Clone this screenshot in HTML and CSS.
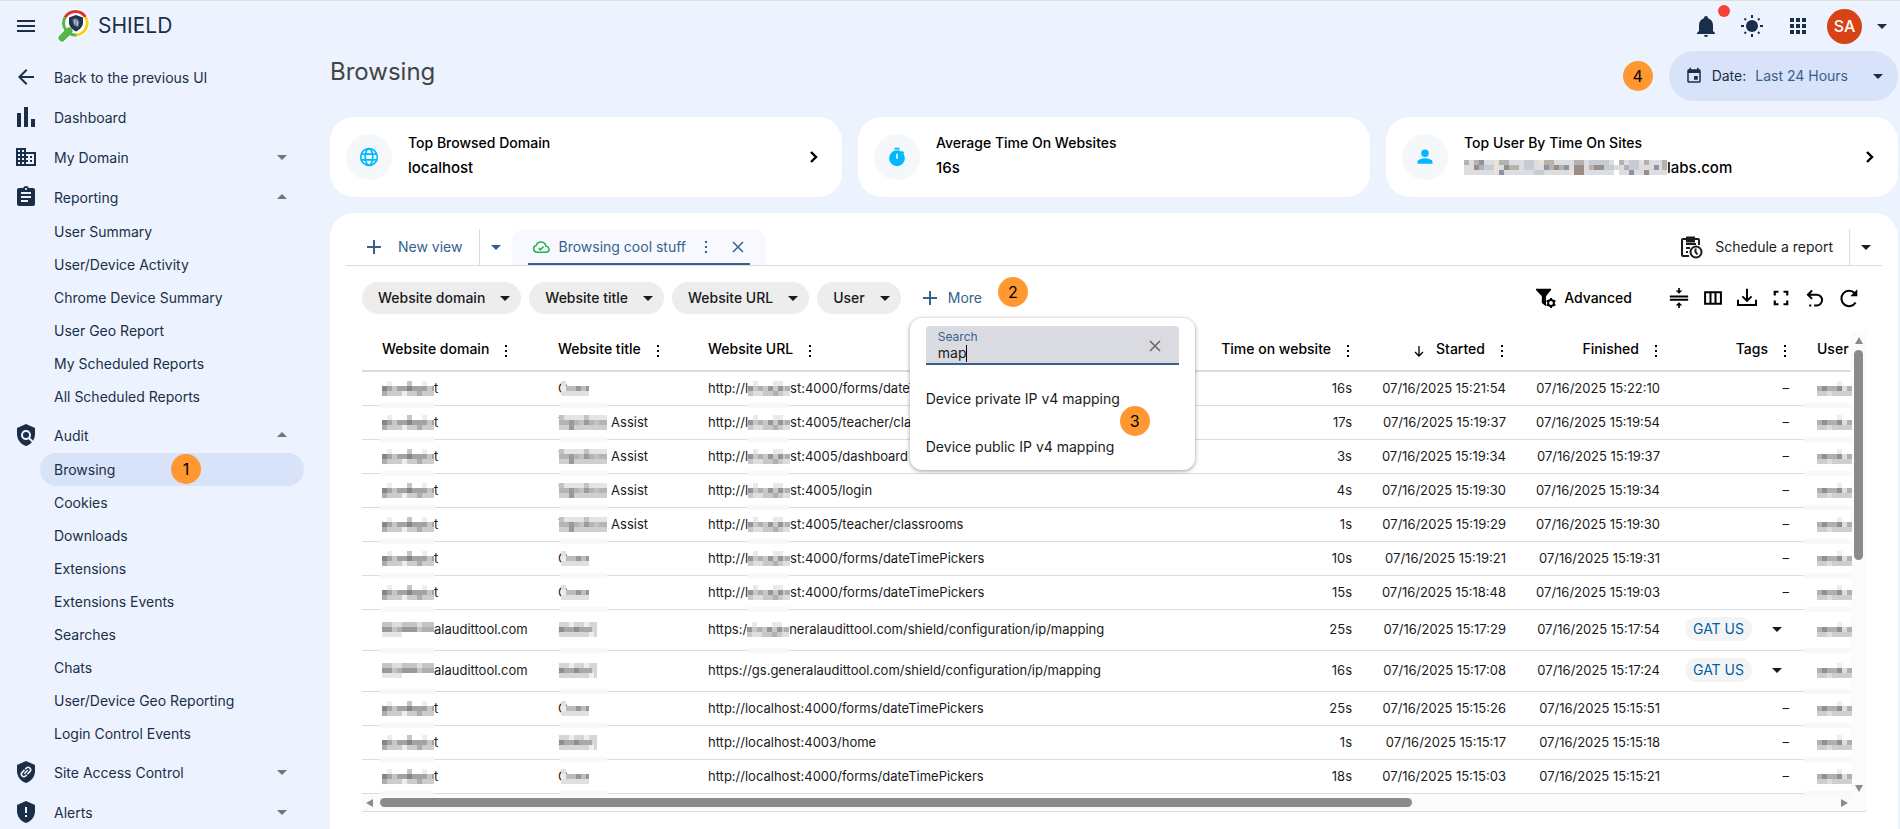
FILE: index.html
```html
<!DOCTYPE html>
<html lang="en">
<head>
    <meta charset="UTF-8">
    <meta name="viewport" content="width=device-width, initial-scale=1.0">
    <title>Shield - Browsing</title>
    <link rel="stylesheet" href="styles.css">
</head>
<body>
    <!-- Shared icons -->
    <svg class="sprite" aria-hidden="true">
        <symbol id="i-down" viewBox="0 0 24 24"><path d="M7 10l5 5 5-5z"/></symbol>
        <symbol id="i-up" viewBox="0 0 24 24"><path d="M7 14l5-5 5 5z"/></symbol>
        <symbol id="i-dots" viewBox="0 0 16 16"><path d="M7 2h2v2H7zM7 7h2v2H7zM7 12h2v2H7z"/></symbol>
        <symbol id="i-plus" viewBox="0 0 20 20"><path d="M9 3h2v6h6v2h-6v6H9v-6H3V9h6z"/></symbol>
        <symbol id="i-close" viewBox="0 0 16 16"><path d="M3 3l10 10M13 3L3 13" fill="none" stroke="currentColor" stroke-width="1.5"/></symbol>
        <symbol id="i-chevron" viewBox="0 0 24 24"><path d="M9 7l5 5-5 5" fill="none" stroke="currentColor" stroke-width="2.4"/></symbol>
        <symbol id="i-shield" viewBox="0 0 24 24"><path d="M12 1L3 5v6c0 5.55 3.84 10.74 9 12 5.16-1.26 9-6.45 9-12V5z"/></symbol>

        <!-- Redaction blocks, 5px cells -->
        <symbol id="m-domain" viewBox="0 0 52 15">
            <path fill="#ccc" d="M0 10h52v5H0z"/><path fill="#a3a3a3" d="M0 5h52v5H0z"/>
            <path fill="#eee" d="M5 0h5v5H5zM40 0h5v5h-5zM20 10h5v5h-5z"/>
            <path fill="#c6c6c6" d="M25 0h5v5h-5zM10 5h5v5h-5zM45 5h5v5h-5z"/>
            <path fill="#868686" d="M0 5h5v5H0zM25 5h5v5h-5z"/><path fill="#adadad" d="M0 10h5v5H0zM35 10h5v5h-5z"/>
        </symbol>
        <symbol id="m-gs" viewBox="0 0 52 15">
            <path fill="#c4c4c4" d="M0 0h52v10H0z"/><path fill="#e6e6e6" d="M0 10h20v5H0z"/>
            <path fill="#999" d="M0 5h10v5H0zM20 5h15v5H20z"/><path fill="#b0b0b0" d="M15 5h5v5h-5zM40 5h12v5H40z"/>
            <path fill="#ddd" d="M10 0h10v5H10zM35 0h5v5h-5z"/>
        </symbol>
        <symbol id="m-short" viewBox="0 0 28 15">
            <path fill="#e0e0e0" d="M0 0h5v5H0zM0 10h28v5H0z"/><path fill="#bcbcbc" d="M0 5h28v5H0z"/>
            <path fill="#989898" d="M15 5h5v5h-5zM25 5h3v5h-3z"/><path fill="#ededed" d="M0 5h5v5H0z"/>
        </symbol>
        <symbol id="m-long" viewBox="0 0 48 15">
            <path fill="#e4e4e4" d="M0 0h48v5H0z"/><path fill="#b4b4b4" d="M0 5h48v5H0z"/><path fill="#cfcfcf" d="M0 10h48v5H0z"/>
            <path fill="#9a9a9a" d="M10 5h5v10h-5zM25 5h5v5h-5z"/><path fill="#c2c2c2" d="M25 0h5v5h-5zM0 0h5v5H0zM20 5h5v5h-5zM35 5h5v5h-5z"/>
        </symbol>
        <symbol id="m-shield" viewBox="0 0 38 15">
            <path fill="#d6d6d6" d="M0 0h38v15H0z"/><path fill="#a8a8a8" d="M5 5h28v5H5z"/>
            <path fill="#8e8e8e" d="M0 5h5v5H0zM15 5h5v5h-5z"/><path fill="#efefef" d="M10 0h5v5h-5zM25 0h5v5h-5zM30 10h5v5h-5z"/>
        </symbol>
        <symbol id="m-url" viewBox="0 0 42 15">
            <path fill="#c8c8c8" d="M0 5h42v10H0z"/><path fill="#e9e9e9" d="M5 0h5v5H5zM25 0h10v5H25z"/>
            <path fill="#969696" d="M0 5h5v5H0zM20 5h5v5h-5zM30 5h5v5h-5z"/><path fill="#b0b0b0" d="M10 5h5v5h-5zM25 10h5v5h-5zM37 5h5v5h-5z"/>
            <path fill="#dedede" d="M5 10h10v5H5zM35 10h7v5h-7z"/>
        </symbol>
        <symbol id="m-user" viewBox="0 0 35 15">
            <path fill="#eee" d="M20 0h5v5h-5z"/><path fill="#b0b0b0" d="M0 5h35v5H0z"/><path fill="#cecece" d="M0 10h35v5H0z"/>
            <path fill="#909090" d="M5 5h5v5H5zM20 5h5v5h-5z"/><path fill="#ddd" d="M10 10h5v5h-5zM25 5h5v5h-5z"/>
        </symbol>
    </svg>

    <header class="topbar">
        <button class="icon-btn" aria-label="Menu">
            <svg viewBox="0 0 24 24"><path d="M3 18h18v-2H3zm0-5h18v-2H3zm0-7v2h18V6z"/></svg>
        </button>
        <a class="brand" href="#">
            <svg class="logo" viewBox="0 0 34 34">
                <path d="M12 22l-7 7" stroke="#fff" stroke-width="9" stroke-linecap="round"/>
                <circle cx="19" cy="14" r="14" fill="#fff"/>
                <path d="M12 22l-7 7" stroke="#55b748" stroke-width="7" stroke-linecap="round"/>
                <g fill="none" stroke-width="3">
                    <path d="M8 8.500a12 12 0 0 1 20.500-.5" stroke="#dd3333"/>
                    <path d="M28.500 8a12 12 0 0 1-9 18" stroke="#fbd116"/>
                    <path d="M19.500 26A12 12 0 0 1 8 8.500" stroke="#55b748"/>
                </g>
                <path d="M19 6l7 2.500v5c0 4-3 7-7 9-4-2-7-5-7-9v-5z" fill="#1f3450"/>
                <path d="M16 10h4l2 3-1 5-4-2zM15 13h2M19 11v6" fill="#b9c3cf" stroke="#54657c"/>
            </svg>
            <span>SHIELD</span>
        </a>
        <div class="topbar-tools">
            <button class="icon-btn notify" aria-label="Notifications">
                <svg viewBox="0 0 24 24"><path d="M21 19v1H3v-1l2-2v-6c0-3.100 2.030-5.830 5-6.710V4a2 2 0 0 1 4 0v.29c2.970.88 5 3.610 5 6.710v6l2 2m-7 2a2 2 0 0 1-4 0"/></svg>
            </button>
            <button class="icon-btn" aria-label="Theme">
                <svg viewBox="0 0 24 24"><circle cx="12" cy="12" r="6"/><path d="M1 12h3M20 12h3M12 1v3M12 20v3M4.500 4.500L6 6M18 18l1.500 1.500M4.500 19.500L6 18M18 6l1.500-1.500" stroke="currentColor" stroke-width="2"/></svg>
            </button>
            <button class="icon-btn" aria-label="Apps">
                <svg viewBox="0 0 24 24"><path d="M4 4h4v4H4zM10 4h4v4h-4zM16 4h4v4h-4zM4 10h4v4H4zM10 10h4v4h-4zM16 10h4v4h-4zM4 16h4v4H4zM10 16h4v4h-4zM16 16h4v4h-4z"/></svg>
            </button>
            <button class="account" aria-label="Account">
                <span class="avatar">SA</span>
                <svg><use href="#i-down"/></svg>
            </button>
        </div>
    </header>

    <div class="layout">
        <nav class="sidebar">
            <a class="nav-item" href="#">
                <svg viewBox="0 0 24 24"><path d="M20 11H7.830l5.590-5.590L12 4l-8 8 8 8 1.410-1.410L7.830 13H20z"/></svg>
                <span>Back to the previous UI</span>
            </a>
            <a class="nav-item" href="#">
                <svg viewBox="0 0 24 24"><path d="M3 8h4v14H3zM10 2h4v20h-4zM17 14h4v8h-4z"/></svg>
                <span>Dashboard</span>
            </a>
            <a class="nav-item" href="#">
                <svg viewBox="0 0 24 24"><path d="M12 7V3H2v18h20V7H12zM6 19H4v-2h2v2zm0-4H4v-2h2v2zm0-4H4V9h2v2zm0-4H4V5h2v2zm4 12H8v-2h2v2zm0-4H8v-2h2v2zm0-4H8V9h2v2zm0-4H8V5h2v2zm10 12h-8v-2h2v-2h-2v-2h2v-2h-2V9h8v10zm-2-8h-2v2h2v-2zm0 4h-2v2h2v-2z"/></svg>
                <span>My Domain</span>
                <svg class="caret"><use href="#i-down"/></svg>
            </a>
            <a class="nav-item" href="#">
                <svg viewBox="0 0 24 24"><path d="M19 3h-4.180C14.400 1.840 13.300 1 12 1c-1.300 0-2.400.84-2.820 2H5c-1.100 0-2 .9-2 2v14c0 1.100.9 2 2 2h14c1.100 0 2-.9 2-2V5c0-1.100-.9-2-2-2zm-7 0c.55 0 1 .45 1 1s-.45 1-1 1-1-.45-1-1 .45-1 1-1zm2 14H7v-2h7v2zm3-4H7v-2h10v2zm0-4H7V7h10v2z"/></svg>
                <span>Reporting</span>
                <svg class="caret"><use href="#i-up"/></svg>
            </a>
            <div class="subnav">
                <a href="#">User Summary</a>
                <a href="#">User/Device Activity</a>
                <a href="#">Chrome Device Summary</a>
                <a href="#">User Geo Report</a>
                <a href="#">My Scheduled Reports</a>
                <a href="#">All Scheduled Reports</a>
            </div>
            <a class="nav-item" href="#">
                <svg viewBox="0 0 24 24"><path d="M21 5l-9-4-9 4v6c0 5.550 3.840 10.740 9 12 2.300-.56 4.330-1.900 5.880-3.710l-3.120-3.120c-1.940 1.290-4.580 1.070-6.290-.64-1.950-1.950-1.950-5.120 0-7.070 1.950-1.950 5.120-1.950 7.070 0 1.710 1.710 1.920 4.350.64 6.290l2.900 2.900C20.290 15.690 21 13.380 21 11V5z"/><circle cx="12" cy="12" r="3"/></svg>
                <span>Audit</span>
                <svg class="caret"><use href="#i-up"/></svg>
            </a>
            <div class="subnav">
                <a href="#" class="active">Browsing <span class="step step-1">1</span></a>
                <a href="#">Cookies</a>
                <a href="#">Downloads</a>
                <a href="#">Extensions</a>
                <a href="#">Extensions Events</a>
                <a href="#">Searches</a>
                <a href="#">Chats</a>
                <a href="#">User/Device Geo Reporting</a>
                <a href="#">Login Control Events</a>
            </div>
            <a class="nav-item" href="#">
                <svg viewBox="0 0 24 24"><use href="#i-shield"/><g fill="none" stroke="#ecf3ff" stroke-width="1.500" transform="rotate(-45 12 12)"><path d="M12.500 9.500H9a2.500 2.500 0 0 0 0 5h1.500M11.500 14.500H15a2.500 2.500 0 0 0 0-5h-1.500M9.500 12h5"/></g></svg>
                <span>Site Access Control</span>
                <svg class="caret"><use href="#i-down"/></svg>
            </a>
            <a class="nav-item" href="#">
                <svg viewBox="0 0 24 24"><use href="#i-shield"/><path fill="#ecf3ff" d="M11 7h2v6h-2zM11 15h2v2h-2z"/></svg>
                <span>Alerts</span>
                <svg class="caret"><use href="#i-down"/></svg>
            </a>
        </nav>

        <main class="content">
            <div class="page-head">
                <h1>Browsing</h1>
                <span class="step">4</span>
                <button class="date-btn">
                    <svg class="calendar" viewBox="0 0 24 24"><path d="M17 12h-5v5h5v-5zM16 1v2H8V1H6v2H5c-1.110 0-1.990.9-1.990 2L3 19c0 1.100.89 2 2 2h14c1.100 0 2-.9 2-2V5c0-1.100-.9-2-2-2h-1V1h-2zm3 18H5V8h14v11z"/></svg>
                    <span>Date:</span>
                    <span class="date-value">Last 24 Hours</span>
                    <svg><use href="#i-down"/></svg>
                </button>
            </div>

            <section class="cards">
                <div class="card">
                    <span class="card-icon">
                        <svg viewBox="0 0 24 24" fill="none" stroke="currentColor" stroke-width="2"><circle cx="12" cy="12" r="10"/><ellipse cx="12" cy="12" rx="4.500" ry="10"/><path d="M3 8.500h18M3 15.500h18"/></svg>
                    </span>
                    <div class="card-text">
                        <h2>Top Browsed Domain</h2>
                        <p>localhost</p>
                    </div>
                    <button class="card-link" aria-label="Open"><svg><use href="#i-chevron"/></svg></button>
                </div>
                <div class="card">
                    <span class="card-icon">
                        <svg viewBox="0 0 24 24"><path d="M9 1h6v2H9zM18.500 4.600l2.200 2.200-1.600 1.500-2.200-2.200z"/><path fill-rule="evenodd" d="M12 4a9.500 9.500 0 1 0 0 19 9.500 9.500 0 0 0 0-19zm-1 4h2v6h-2z"/></svg>
                    </span>
                    <div class="card-text">
                        <h2>Average Time On Websites</h2>
                        <p>16s</p>
                    </div>
                </div>
                <div class="card">
                    <span class="card-icon">
                        <svg viewBox="0 0 24 24"><circle cx="12" cy="7.500" r="4.500"/><path d="M12 13.500c-3 0-9 1.400-9 4.500v2h18v-2c0-3.100-6-4.500-9-4.500z"/></svg>
                    </span>
                    <div class="card-text">
                        <h2>Top User By Time On Sites</h2>
                        <p>
                            <svg class="mosaic m-email" viewBox="0 0 203 15">
                                <path fill="#dcdde0" d="M0 0h203v15H0z"/>
                                <path fill="#b5b2ae" d="M0 0h5v5H0zM10 0h5v5h-5zM35 0h10v5H35zM80 0h10v5H80zM110 0h10v5h-10zM155 0h5v5h-5zM180 0h5v5h-5zM198 0h5v10h-5zM15 5h5v5h-5zM45 5h10v5H45zM85 5h15v5H85zM125 5h5v5h-5zM160 5h5v5h-5z"/>
                                <path fill="#8b94a3" d="M15 0h5v5h-5zM80 5h5v5h-5zM100 5h5v5h-5zM35 10h5v5h-5zM165 10h5v5h-5zM190 5h5v5h-5z"/>
                                <path fill="#9a8c86" d="M10 5h5v5h-5zM40 5h5v5h-5zM90 5h5v5h-5zM110 5h10v10h-10zM130 5h10v5h-10zM180 10h5v5h-5z"/>
                                <path fill="#e9e3d6" d="M30 0h5v15h-5zM75 0h5v5h-5zM105 10h5v5h-5zM175 0h5v5h-5z"/>
                                <path fill="#c6ccd4" d="M20 5h10v5H20zM60 0h10v10H60zM140 5h10v5h-10zM165 0h10v10h-10zM70 10h10v5H70zM125 0h20v5h-20z"/>
                                <path fill="#fff" d="M150 0h5v5h-5zM150 10h5v5h-5z"/>
                            </svg><span>labs.com</span>
                        </p>
                    </div>
                    <button class="card-link" aria-label="Open"><svg><use href="#i-chevron"/></svg></button>
                </div>
            </section>

            <section class="panel">
                <!-- View tabs -->
                <div class="tabs">
                    <button class="new-view"><svg><use href="#i-plus"/></svg>New view</button>
                    <button class="split" aria-label="Views"><svg><use href="#i-down"/></svg></button>
                    <div class="tab">
                        <div class="tab-inner">
                            <svg class="cloud" viewBox="0 0 24 24" fill="none" stroke="#22b14c" stroke-width="2" stroke-linejoin="round"><path d="M6.500 19a4.500 4.500 0 0 1-.8-8.900A6.500 6.500 0 0 1 18.400 11 4 4 0 0 1 19 19z"/><path d="M9 13.500l2.300 2.300 4-4.300"/></svg>
                            <a href="#">Browsing cool stuff</a>
                            <button aria-label="View menu"><svg><use href="#i-dots"/></svg></button>
                            <button aria-label="Close view"><svg><use href="#i-close"/></svg></button>
                        </div>
                    </div>
                    <button class="schedule">
                        <svg viewBox="0 0 24 24" fill="none" stroke="currentColor" stroke-width="2"><path d="M20 10V5a1 1 0 0 0-1-1H4a1 1 0 0 0-1 1v15a1 1 0 0 0 1 1h6M7 9h10M7 13h4M7 17h2"/><path d="M8 2.500h7v4H8z" fill="currentColor"/><circle cx="17" cy="17" r="5.500"/><path d="M16.500 13.500V17l2 2.500"/></svg>
                        Schedule a report
                    </button>
                    <button class="split split-right" aria-label="Report options"><svg><use href="#i-down"/></svg></button>
                </div>

                <!-- Filters -->
                <div class="filters">
                    <button class="chip">Website domain<svg><use href="#i-down"/></svg></button>
                    <button class="chip">Website title<svg><use href="#i-down"/></svg></button>
                    <button class="chip">Website URL<svg><use href="#i-down"/></svg></button>
                    <button class="chip">User<svg><use href="#i-down"/></svg></button>
                    <div class="more">
                        <button class="more-btn"><svg><use href="#i-plus"/></svg>More</button>
                        <span class="step step-2">2</span>
                        <div class="more-menu">
                            <div class="search">
                                <div class="search-field">
                                    <label for="column-search">Search</label>
                                    <input id="column-search" type="text" value="map" autocomplete="off">
                                    <i class="cursor"></i>
                                </div>
                                <button aria-label="Clear"><svg><use href="#i-close"/></svg></button>
                            </div>
                            <button class="option">Device private IP v4 mapping</button>
                            <button class="option">Device public IP v4 mapping</button>
                            <span class="step step-3">3</span>
                        </div>
                    </div>
                    <div class="tools">
                        <button class="advanced">
                            <svg viewBox="0 0 24 24"><path d="M0 1h18v1.500L12 10v12l-5-4v-8L0 2.500z"/><circle cx="18" cy="18" r="3.500" fill="#fff" stroke="currentColor" stroke-width="2.400"/><path d="M18 12v2M18 22v2M12.800 15l1.800 1M21.400 20l1.800 1M12.800 21l1.800-1M21.400 16l1.800-1" stroke="currentColor" stroke-width="2.400"/></svg>
                            Advanced
                        </button>
                        <button aria-label="Density"><svg viewBox="0 0 24 24"><path d="M1 9h22v2.400H1zM1 13h22v2.400H1zM11 0h2v3h3l-4 4-4-4h3zM11 24v-3H8l4-4 4 4h-3v3z"/></svg></button>
                        <button aria-label="Columns"><svg viewBox="0 0 24 24" fill="none" stroke="currentColor" stroke-width="2.400"><path d="M2.500 5h19v14h-19zM9 5v14M15 5v14"/></svg></button>
                        <button aria-label="Export"><svg viewBox="0 0 24 24" fill="none" stroke="currentColor" stroke-width="2.400"><path d="M1.200 14v6.500h21.600V14M12 1v14M6.500 10l5.500 5.500L17.500 10"/></svg></button>
                        <button aria-label="Full screen"><svg viewBox="0 0 24 24" fill="none" stroke="currentColor" stroke-width="2.600"><path d="M4.500 9V4.500H9M15 4.500h4.500V9M19.500 15v4.500H15M9 19.500H4.500V15"/></svg></button>
                        <button aria-label="Undo"><svg viewBox="0 0 24 24" fill="none" stroke="currentColor" stroke-width="2.400"><path d="M4 8h10a6.500 6.500 0 0 1 0 13h-3M8.500 3l-5 5 5 5M7.500 21H5"/></svg></button>
                        <button aria-label="Refresh"><svg viewBox="0 0 24 24"><path d="M20 17.500A9.300 9.300 0 1 1 18.800 6" fill="none" stroke="currentColor" stroke-width="2.400"/><path d="M22 1.500V10h-8.500z"/></svg></button>
                    </div>
                </div>

                <!-- Events -->
                <div class="grid">
                    <table>
                        <colgroup>
                            <col class="c-domain"><col class="c-title"><col><col class="c-time"><col class="c-date"><col class="c-date"><col class="c-tags"><col class="c-user">
                        </colgroup>
                        <thead>
                            <tr>
                                <th><div>Website domain<svg><use href="#i-dots"/></svg></div></th>
                                <th><div>Website title<svg><use href="#i-dots"/></svg></div></th>
                                <th><div>Website URL<svg><use href="#i-dots"/></svg></div></th>
                                <th><div>Time on website<svg><use href="#i-dots"/></svg></div></th>
                                <th><div><svg class="sort" viewBox="0 0 16 16"><path d="M8 3v10M4 9l4 4 4-4" fill="none" stroke="currentColor" stroke-width="1.300"/></svg>Started<svg><use href="#i-dots"/></svg></div></th>
                                <th><div>Finished<svg><use href="#i-dots"/></svg></div></th>
                                <th><div>Tags<svg><use href="#i-dots"/></svg></div></th>
                                <th><div>User</div></th>
                            </tr>
                        </thead>
                        <tbody>
                            <tr>
                                <td class="redacted"><svg class="mosaic m-domain"><use href="#m-domain"/></svg>t</td>
                                <td class="redacted">C<svg class="mosaic m-short"><use href="#m-short"/></svg></td>
                                <td class="redacted">http://l<svg class="mosaic m-url"><use href="#m-url"/></svg>st:4000/forms/dateTimePickers</td>
                                <td>16s</td><td>07/16/2025 15:21:54</td><td>07/16/2025 15:22:10</td><td>–</td>
                                <td class="redacted"><svg class="mosaic m-user"><use href="#m-user"/></svg></td>
                            </tr>
                            <tr>
                                <td class="redacted"><svg class="mosaic m-domain"><use href="#m-domain"/></svg>t</td>
                                <td class="redacted">T<svg class="mosaic m-long"><use href="#m-long"/></svg> Assist</td>
                                <td class="redacted">http://l<svg class="mosaic m-url"><use href="#m-url"/></svg>st:4005/teacher/classrooms</td>
                                <td>17s</td><td>07/16/2025 15:19:37</td><td>07/16/2025 15:19:54</td><td>–</td>
                                <td class="redacted"><svg class="mosaic m-user"><use href="#m-user"/></svg></td>
                            </tr>
                            <tr>
                                <td class="redacted"><svg class="mosaic m-domain"><use href="#m-domain"/></svg>t</td>
                                <td class="redacted">T<svg class="mosaic m-long"><use href="#m-long"/></svg> Assist</td>
                                <td class="redacted">http://l<svg class="mosaic m-url"><use href="#m-url"/></svg>st:4005/dashboard</td>
                                <td>3s</td><td>07/16/2025 15:19:34</td><td>07/16/2025 15:19:37</td><td>–</td>
                                <td class="redacted"><svg class="mosaic m-user"><use href="#m-user"/></svg></td>
                            </tr>
                            <tr>
                                <td class="redacted"><svg class="mosaic m-domain"><use href="#m-domain"/></svg>t</td>
                                <td class="redacted">T<svg class="mosaic m-long"><use href="#m-long"/></svg> Assist</td>
                                <td class="redacted">http://l<svg class="mosaic m-url"><use href="#m-url"/></svg>st:4005/login</td>
                                <td>4s</td><td>07/16/2025 15:19:30</td><td>07/16/2025 15:19:34</td><td>–</td>
                                <td class="redacted"><svg class="mosaic m-user"><use href="#m-user"/></svg></td>
                            </tr>
                            <tr>
                                <td class="redacted"><svg class="mosaic m-domain"><use href="#m-domain"/></svg>t</td>
                                <td class="redacted">T<svg class="mosaic m-long"><use href="#m-long"/></svg> Assist</td>
                                <td class="redacted">http://l<svg class="mosaic m-url"><use href="#m-url"/></svg>st:4005/teacher/classrooms</td>
                                <td>1s</td><td>07/16/2025 15:19:29</td><td>07/16/2025 15:19:30</td><td>–</td>
                                <td class="redacted"><svg class="mosaic m-user"><use href="#m-user"/></svg></td>
                            </tr>
                            <tr>
                                <td class="redacted"><svg class="mosaic m-domain"><use href="#m-domain"/></svg>t</td>
                                <td class="redacted">C<svg class="mosaic m-short"><use href="#m-short"/></svg></td>
                                <td class="redacted">http://l<svg class="mosaic m-url"><use href="#m-url"/></svg>st:4000/forms/dateTimePickers</td>
                                <td>10s</td><td>07/16/2025 15:19:21</td><td>07/16/2025 15:19:31</td><td>–</td>
                                <td class="redacted"><svg class="mosaic m-user"><use href="#m-user"/></svg></td>
                            </tr>
                            <tr>
                                <td class="redacted"><svg class="mosaic m-domain"><use href="#m-domain"/></svg>t</td>
                                <td class="redacted">C<svg class="mosaic m-short"><use href="#m-short"/></svg></td>
                                <td class="redacted">http://l<svg class="mosaic m-url"><use href="#m-url"/></svg>st:4000/forms/dateTimePickers</td>
                                <td>15s</td><td>07/16/2025 15:18:48</td><td>07/16/2025 15:19:03</td><td>–</td>
                                <td class="redacted"><svg class="mosaic m-user"><use href="#m-user"/></svg></td>
                            </tr>
                            <tr class="tagged">
                                <td class="redacted"><svg class="mosaic m-domain"><use href="#m-gs"/></svg>alaudittool.com</td>
                                <td class="redacted">S<svg class="mosaic m-shield"><use href="#m-shield"/></svg></td>
                                <td class="redacted">https:/<svg class="mosaic m-url"><use href="#m-url"/></svg>neralaudittool.com/shield/configuration/ip/mapping</td>
                                <td>25s</td><td>07/16/2025 15:17:29</td><td>07/16/2025 15:17:54</td>
                                <td><div class="tags"><a class="tag" href="#">GAT US</a><button aria-label="Tags"><svg><use href="#i-down"/></svg></button></div></td>
                                <td class="redacted"><svg class="mosaic m-user"><use href="#m-user"/></svg></td>
                            </tr>
                            <tr class="tagged">
                                <td class="redacted"><svg class="mosaic m-domain"><use href="#m-gs"/></svg>alaudittool.com</td>
                                <td class="redacted">S<svg class="mosaic m-shield"><use href="#m-shield"/></svg></td>
                                <td>https://gs.generalaudittool.com/shield/configuration/ip/mapping</td>
                                <td>16s</td><td>07/16/2025 15:17:08</td><td>07/16/2025 15:17:24</td>
                                <td><div class="tags"><a class="tag" href="#">GAT US</a><button aria-label="Tags"><svg><use href="#i-down"/></svg></button></div></td>
                                <td class="redacted"><svg class="mosaic m-user"><use href="#m-user"/></svg></td>
                            </tr>
                            <tr>
                                <td class="redacted"><svg class="mosaic m-domain"><use href="#m-domain"/></svg>t</td>
                                <td class="redacted">C<svg class="mosaic m-short"><use href="#m-short"/></svg></td>
                                <td>http://localhost:4000/forms/dateTimePickers</td>
                                <td>25s</td><td>07/16/2025 15:15:26</td><td>07/16/2025 15:15:51</td><td>–</td>
                                <td class="redacted"><svg class="mosaic m-user"><use href="#m-user"/></svg></td>
                            </tr>
                            <tr>
                                <td class="redacted"><svg class="mosaic m-domain"><use href="#m-domain"/></svg>t</td>
                                <td class="redacted">S<svg class="mosaic m-shield"><use href="#m-shield"/></svg></td>
                                <td>http://localhost:4003/home</td>
                                <td>1s</td><td>07/16/2025 15:15:17</td><td>07/16/2025 15:15:18</td><td>–</td>
                                <td class="redacted"><svg class="mosaic m-user"><use href="#m-user"/></svg></td>
                            </tr>
                            <tr>
                                <td class="redacted"><svg class="mosaic m-domain"><use href="#m-domain"/></svg>t</td>
                                <td class="redacted">C<svg class="mosaic m-short"><use href="#m-short"/></svg></td>
                                <td>http://localhost:4000/forms/dateTimePickers</td>
                                <td>18s</td><td>07/16/2025 15:15:03</td><td>07/16/2025 15:15:21</td><td>–</td>
                                <td class="redacted"><svg class="mosaic m-user"><use href="#m-user"/></svg></td>
                            </tr>
                        </tbody>
                    </table>
                    <div class="vscroll"><i class="arrow up"></i><i class="thumb"></i><i class="arrow down"></i></div>
                    <div class="hscroll"><i class="arrow left"></i><i class="track"><i class="thumb"></i></i><i class="arrow right"></i></div>
                </div>
            </section>
        </main>
    </div>
</body>
</html>
```
FILE: styles.css
```css
:root {
    --page: #ecf3ff;
    --navy: #1a2f47;
    --blue: #36618e;
    --pill: #d8e2f9;
    --line: #dcdcdc;
    --sky: #00b8ff;
    --orange: #ff9831;
}

* {
    box-sizing: border-box;
}

body {
    margin: 0;
    height: 100vh;
    overflow: hidden;
    display: flex;
    flex-direction: column;
    background: var(--page);
    border-top: 1px solid #dde2d6;
    color: #000;
    font: 14px/20px Inter, sans-serif;
}

svg {
    display: block;
    flex: none;
    width: 24px;
    height: 24px;
    fill: currentColor;
}

svg[fill="none"] {
    fill: none;
}

button {
    display: flex;
    align-items: center;
    padding: 0;
    border: none;
    background: none;
    color: inherit;
    font: inherit;
    white-space: nowrap;
    cursor: pointer;
}

a {
    color: inherit;
    text-decoration: none;
}

.sprite {
    display: none;
}

/* Numbered markers */
.step {
    display: flex;
    align-items: center;
    justify-content: center;
    width: 30px;
    height: 30px;
    border-radius: 50%;
    background: var(--orange);
    color: #000;
    font-size: 16px;
}

.step-1, .step-2, .step-3 {
    position: absolute;
}

.step-1 {
    left: 131px;
    top: 1px;
}

.step-2 {
    left: 88px;
    top: -5px;
}

.step-3 {
    left: 210px;
    top: 88px;
}

/* Top bar */
.topbar {
    display: flex;
    align-items: center;
    flex: none;
    height: 50px;
    padding: 0 6px 0 14px;
    color: var(--navy);
}

.brand {
    display: flex;
    align-items: center;
    gap: 7px;
    margin-left: 19px;
    font-size: 21px;
}

.logo {
    width: 34px;
    height: 34px;
}

.topbar-tools {
    display: flex;
    align-items: center;
    gap: 22px;
    margin-left: auto;
}

.notify {
    position: relative;
}

.notify::after {
    content: "";
    position: absolute;
    left: 24px;
    top: -9px;
    width: 12px;
    height: 12px;
    border-radius: 50%;
    background: #f44336;
}

.account {
    gap: 8px;
    margin-left: -5px;
}

.avatar {
    width: 35px;
    height: 35px;
    border-radius: 50%;
    background: #d84315;
    color: #fff;
    font-size: 16px;
    font-weight: 500;
    line-height: 35px;
    text-align: center;
}

/* Sidebar */
.layout {
    display: flex;
    flex: 1;
    min-height: 0;
}

.sidebar {
    flex: none;
    width: 330px;
    padding: 4px 26px 0 0;
    color: var(--navy);
}

.nav-item {
    display: flex;
    align-items: center;
    gap: 16px;
    height: 36px;
    margin-top: 4px;
    padding: 0 10px 0 14px;
}

.nav-item span {
    padding-top: 2px;
}

.nav-item .caret {
    margin-left: auto;
    color: #757575;
}

.subnav a {
    display: flex;
    align-items: center;
    position: relative;
    height: 33px;
    margin-left: 40px;
    padding-left: 14px;
    border-radius: 17px;
}

.subnav .active {
    background: var(--pill);
}

/* Main column */
.content {
    display: flex;
    flex: 1;
    flex-direction: column;
    gap: 16px;
    min-width: 0;
    padding-right: 2px;
}

.page-head {
    display: flex;
    align-items: center;
    height: 50px;
}

h1 {
    flex: 1;
    margin: 0 0 8px;
    color: #444;
    font-size: 24px;
    font-weight: 400;
    line-height: 32px;
}

.date-btn {
    gap: 9px;
    height: 50px;
    margin-left: 16px;
    padding: 0 8px 0 16px;
    border-radius: 25px;
    background: var(--pill);
    color: var(--navy);
}

.calendar {
    width: 18px;
    height: 18px;
}

.date-value {
    margin-right: 9px;
    color: var(--blue);
}

.cards {
    display: grid;
    grid-template-columns: repeat(3, 1fr);
    gap: 16px;
}

.card {
    display: flex;
    align-items: center;
    gap: 16px;
    height: 80px;
    padding: 0 16px;
    border-radius: 24px;
    background: #fff;
}

.card-icon {
    display: flex;
    align-items: center;
    justify-content: center;
    width: 46px;
    height: 46px;
    border-radius: 50%;
    background: #f4f8fb;
    color: var(--sky);
}

.card-icon svg {
    width: 20px;
    height: 20px;
}

.card-text {
    flex: 1;
    padding-bottom: 4px;
}

.card h2, .card p {
    display: flex;
    align-items: center;
    margin: 0;
    font-size: 14px;
    font-weight: 500;
    line-height: 25px;
}

.card p {
    font-size: 15px;
}

/* Panel */
.panel {
    flex: 1;
    padding: 16px 16px 0;
    border-radius: 24px 24px 0 0;
    background: #fff;
}

.tabs {
    display: flex;
    height: 37px;
    border-bottom: 1px solid var(--line);
    color: var(--blue);
}

.new-view {
    gap: 14px;
    padding: 0 17px 0 18px;
}

.new-view svg, .more-btn svg {
    width: 20px;
    height: 20px;
}

.split {
    justify-content: center;
    width: 33px;
    border-left: 1px solid var(--line);
}

.tab {
    padding: 0 16px;
    border-radius: 12px 12px 0 0;
    background: #f8f9ff;
}

.tab-inner {
    display: flex;
    align-items: center;
    gap: 12px;
    height: 36px;
    padding: 2px 4px 0;
    border-bottom: 2px solid var(--blue);
}

.tab-inner .cloud {
    width: 18px;
    height: 18px;
    margin-right: -4px;
}

.tab-inner button svg {
    width: 16px;
    height: 16px;
}

.tab-inner button + button {
    margin-left: 4px;
}

.schedule {
    gap: 12px;
    margin-left: auto;
    padding-right: 16px;
    color: #1a1c1e;
}

.split-right {
    color: #1a1c1e;
}

.filters {
    display: flex;
    gap: 8px;
    height: 32px;
    margin: 16px 16px 18px;
}

.chip {
    gap: 8px;
    padding: 0 4px 0 16px;
    border-radius: 16px;
    background: #ededed;
    color: #1a1a1a;
    font-weight: 500;
}

.more {
    position: relative;
    margin-left: 1px;
}

.more-btn {
    gap: 8px;
    height: 32px;
    padding-left: 10px;
    color: var(--blue);
}

.more-menu {
    position: absolute;
    z-index: 2;
    left: 0;
    top: 36px;
    width: 285px;
    padding: 8px 0 0;
    border-radius: 12px;
    background: #fff;
    box-shadow: 0 1px 4px rgba(0, 0, 0, 0.4);
}

.search {
    display: flex;
    align-items: center;
    justify-content: space-between;
    height: 39px;
    margin: 0 16px 9px;
    padding: 2px 16px 0 12px;
    border-bottom: 2px solid var(--blue);
    border-radius: 4px 4px 0 0;
    background: #dadbe1;
    color: #666;
}

.search-field {
    position: relative;
}

.search-field label {
    display: block;
    color: var(--blue);
    font-size: 12px;
    line-height: 14px;
}

.search-field input {
    display: block;
    width: 180px;
    height: 18px;
    padding: 0;
    border: none;
    outline: none;
    background: none;
    color: #1a1c1e;
    font: inherit;
}

.cursor {
    position: absolute;
    left: 28px;
    bottom: 0;
    width: 1px;
    height: 17px;
    background: #000;
}

.search svg {
    width: 16px;
    height: 16px;
}

.option {
    width: 100%;
    height: 48px;
    padding: 2px 0 0 16px;
    color: #1a1c1e;
}

.tools {
    display: flex;
    margin-left: auto;
}

.tools button {
    justify-content: center;
    width: 34px;
}

.tools svg {
    width: 20px;
    height: 20px;
}

.tools .advanced {
    gap: 8px;
    width: auto;
    margin-right: 30px;
    font-weight: 500;
}

/* Table */
.grid {
    display: grid;
    grid-template-columns: 1fr 15px;
    margin: 0 16px;
    border-bottom: 1px solid var(--line);
}

table {
    width: 100%;
    table-layout: fixed;
    border-collapse: separate;
    border-spacing: 0;
    color: #1a1a1a;
    font-size: 13px;
}

.c-domain { width: 188px; }
.c-title { width: 150px; }
.c-time { width: 183px; }
.c-date { width: 154px; }
.c-tags { width: 141px; }
.c-user { width: 42px; }

th, td {
    position: relative;
    padding: 0 8px;
    border-bottom: 1px solid var(--line);
    text-align: left;
    white-space: nowrap;
}

th {
    height: 40px;
    padding-right: 4px;
    padding-bottom: 5px;
    border-bottom-width: 2px;
    color: #000;
    font-size: 14px;
    font-weight: 500;
}

th div {
    display: flex;
    align-items: center;
    gap: 9px;
}

th svg {
    width: 16px;
    height: 16px;
    margin-top: 4px;
}

td {
    height: 34px;
    padding-bottom: 2px;
}

.tagged td {
    height: 41px;
}

th:first-child, td:first-child {
    padding-left: 20px;
}

th:nth-child(7) {
    padding-right: 16px;
}

td:nth-child(7) {
    padding-right: 20px;
}

th:last-child, td:last-child {
    padding-right: 0;
}

th:nth-child(n+4):nth-child(-n+7) div {
    justify-content: flex-end;
}

td:nth-child(n+4):nth-child(-n+7) {
    text-align: right;
}

.tags {
    display: flex;
    align-items: center;
    justify-content: flex-end;
    gap: 13px;
}

.tag {
    padding: 2px 8px;
    border-radius: 12px;
    background: #f4f4f4;
    color: #005fa8;
    font-size: 14px;
}

/* Pixelated cells */
.mosaic {
    display: inline-block;
    height: 15px;
    vertical-align: -3px;
}

.m-domain { width: 52px; }
.m-short { width: 28px; }
.m-long { width: 48px; }
.m-shield { width: 38px; }
.m-url { width: 42px; }
.m-user { width: 35px; }
.m-email { width: 203px; }

.m-short, .m-long, .m-shield {
    margin-left: -7px;
}

.redacted::after {
    content: "";
    position: absolute;
    left: 10px;
    bottom: -3px;
    width: 47px;
    height: 5px;
    background: #f8f8f8;
}

.redacted:first-child::after {
    left: 18px;
    width: 54px;
}

.redacted:nth-child(3)::after {
    left: 47px;
    width: 42px;
}

.redacted:last-child::after {
    left: -5px;
}

/* Scroll bars */
.vscroll, .hscroll {
    display: flex;
    align-items: center;
    background: #fbfbfb;
}

.vscroll {
    flex-direction: column;
    padding: 5px 0 2px;
}

.vscroll .thumb {
    width: 9px;
    height: 210px;
    margin: 6px 0 auto;
    border-radius: 5px;
    background: #8b8b8b;
}

.hscroll {
    grid-column: 1 / -1;
    gap: 7px;
    height: 17px;
    padding: 0 18px 0 4px;
}

.hscroll .track {
    flex: 1;
}

.hscroll .thumb {
    display: block;
    width: 71%;
    height: 9px;
    border-radius: 5px;
    background: #8b8b8b;
}

.arrow {
    border: 4px solid transparent;
}

.arrow.up {
    border-top: none;
    border-bottom: 7px solid #8b8b8b;
}

.arrow.down {
    border-bottom: none;
    border-top: 7px solid #8b8b8b;
}

.arrow.left {
    border-left: none;
    border-right: 7px solid #8b8b8b;
}

.arrow.right {
    border-right: none;
    border-left: 7px solid #8b8b8b;
}
```
